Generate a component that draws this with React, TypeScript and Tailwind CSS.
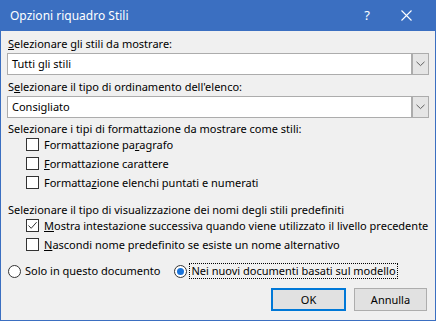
import React from "react";

const font = { fontFamily: '"Noto Sans", "Open Sans", sans-serif' };

function Chevron() {
  return (
    <svg width="9" height="6" viewBox="0 0 9 6">
      <path d="M0.5 0.8 L4.5 4.6 L8.5 0.8" fill="none" stroke="#606060" strokeWidth="1" />
    </svg>
  );
}

function Select({ value }: { value: string }) {
  return (
    <div className="flex h-[22px] w-[422px] items-stretch border border-[#acacac] bg-white">
      <div className="flex flex-1 items-center pl-[4px] text-[11px] text-black">{value}</div>
      <div className="flex w-[16px] items-center justify-center border-l border-[#acacac] bg-[#e5e5e5] outline outline-1 outline-[#acacac]">
        <Chevron />
      </div>
    </div>
  );
}

function Check({ checked }: { checked?: boolean }) {
  return (
    <div className="flex h-[13px] w-[13px] shrink-0 items-center justify-center border border-[#333333] bg-white">
      {checked && (
        <svg width="11" height="11" viewBox="0 0 11 11">
          <path d="M1.5 5.5 L4.2 8.3 L9.6 2.2" fill="none" stroke="#333333" strokeWidth="1" />
        </svg>
      )}
    </div>
  );
}

function CheckRow({ label, checked, first }: { label: React.ReactNode; checked?: boolean; first?: boolean }) {
  return (
    <div className={"flex h-[19px] items-center gap-[5px] pl-[19px] " + (first ? "-mt-[2px]" : "")}>
      <Check checked={checked} />
      <span className="whitespace-nowrap text-[11px] leading-[16px]">{label}</span>
    </div>
  );
}

function Radio({ checked }: { checked?: boolean }) {
  return (
    <div className="flex h-[13px] w-[13px] shrink-0 items-center justify-center rounded-full border border-[#333333] bg-white">
      {checked && <div className="h-[7px] w-[7px] rounded-full bg-[#1a73d9]" />}
    </div>
  );
}

export default function App() {
  return (
    <div style={font} className="flex h-[321px] w-[436px] flex-col border border-t-0 border-[#3b6fc1] bg-[#f0f0f0] text-black">
      <div className="flex h-[31px] shrink-0 items-center bg-[#3b6fc1] pl-[9px] text-white">
        <span className="flex-1 text-[12px]">Opzioni riquadro Stili</span>
        <span className="mr-[31px] text-[13px]">?</span>
        <svg className="mr-[23px]" width="11" height="11" viewBox="0 0 11 11">
          <path d="M0.5 0.5 L10.5 10.5 M10.5 0.5 L0.5 10.5" stroke="white" strokeWidth="1.1" />
        </svg>
      </div>
      <div className="flex flex-1 flex-col whitespace-nowrap pl-[6px] pt-[5px] text-[11px] leading-[16px]">
        <div className="h-[17px] pl-[1px]">
          <u>S</u>elezionare gli stili da mostrare:
        </div>
        <Select value="Tutti gli stili" />
        <div className="mt-[4px] h-[17px] pl-[1px]">
          S<u>e</u>lezionare il tipo di ordinamento dell'elenco:
        </div>
        <Select value="Consigliato" />
        <div className="mt-[3px] h-[16px] pl-[1px]">Selezionare i tipi di formattazione da mostrare come stili:</div>
        <CheckRow first label={<>Formattazione pa<u>r</u>agrafo</>} />
        <CheckRow label={<><u>F</u>ormattazione carattere</>} />
        <CheckRow label={<>Formatta<u>z</u>ione elenchi puntati e numerati</>} />
        <div className="mt-[10px] h-[16px] pl-[1px]">Selezionare il tipo di visualizzazione dei nomi degli stili predefiniti</div>
        <CheckRow first checked label={<><u>M</u>ostra intestazione successiva quando viene utilizzato il livello precedente</>} />
        <CheckRow label={<><u>N</u>ascondi nome predefinito se esiste un nome alternativo</>} />
        <div className="mt-[9px] flex h-[16px] items-center pl-[1px]">
          <Radio />
          <span className="ml-[4px]">Solo in questo documento</span>
          <div className="ml-[14px]">
            <Radio checked />
          </div>
          <span className="ml-[2px] border border-dotted border-black px-[1px] leading-[14px]">Nei nuovi documenti basati sul modello</span>
        </div>
        <div className="mt-[9px] flex justify-end gap-[8px] pr-[8px]">
          <button className="flex h-[23px] w-[75px] items-center justify-center border-2 border-[#0078d7] bg-[#e1e1e1] text-[11px]">
            OK
          </button>
          <button className="flex h-[23px] w-[73px] items-center justify-center border border-[#adadad] bg-[#e1e1e1] text-[11px]">
            Annulla
          </button>
        </div>
      </div>
    </div>
  );
}
